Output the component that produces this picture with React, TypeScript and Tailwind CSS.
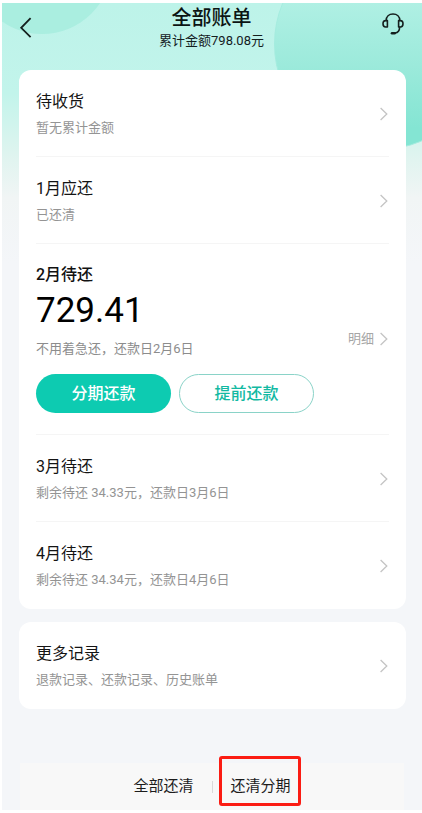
import React from "react";

interface Bill {
  title: string;
  note: string;
}

const pastBills: Bill[] = [
  { title: "待收货", note: "暂无累计金额" },
  { title: "1月应还", note: "已还清" },
];

const nextBills: Bill[] = [
  { title: "3月待还", note: "剩余待还 34.33元，还款日3月6日" },
  { title: "4月待还", note: "剩余待还 34.34元，还款日4月6日" },
];

const Chevron: React.FC = () => (
  <svg
    width="9"
    height="14"
    viewBox="0 0 9 14"
    fill="none"
    stroke="#c4c4c4"
    strokeWidth="1.3"
    className="shrink-0"
    aria-hidden="true"
  >
    <path d="M0.6 1 L6.8 7 L0.6 13" />
  </svg>
);

const HeadsetIcon: React.FC = () => (
  <svg
    width="24"
    height="24"
    viewBox="0 0 24 24"
    fill="none"
    stroke="#15201e"
    strokeWidth="1.6"
    strokeLinecap="round"
    strokeLinejoin="round"
    aria-hidden="true"
  >
    <path d="M5.2 8.4 C5.2 4.6 8 2 12 2 C16 2 18.8 4.6 18.8 8.4" />
    <path d="M6.4 8.6 H4.6 C2.9 8.6 2 9.9 2 11.8 C2 13.7 2.9 15 4.6 15 H6.4 Z" />
    <path d="M17.6 8.6 H19.4 C21.1 8.6 22 9.9 22 11.8 C22 13.7 21.1 15 19.4 15 H17.6 Z" />
    <path d="M18.6 15.2 C18.6 18.6 17 20.6 14 21" />
    <path d="M11 21.2 H13.6" strokeWidth="2.6" />
  </svg>
);

const BillRow: React.FC<Bill> = ({ title, note }) => (
  <button
    type="button"
    className="flex w-full items-center justify-between pt-5 pb-[18px] text-left"
  >
    <span className="flex flex-col gap-1">
      <span className="text-base leading-6 text-[#141414]">{title}</span>
      <span className="text-[13px] leading-5 text-[#949494]">{note}</span>
    </span>
    <Chevron />
  </button>
);

const CurrentBill: React.FC = () => (
  <section className="flex flex-col pt-[19px] pb-[21px]">
    <h2 className="text-base leading-6 font-medium text-[#111111]">2月待还</h2>
    <div className="flex items-end justify-between">
      <div>
        <p className="mt-1 text-[35px] leading-10 text-black">729.41</p>
        <p className="mt-2 text-[13px] leading-5 text-[#8c8c8c]">
          不用着急还，还款日2月6日
        </p>
      </div>
      <button
        type="button"
        className="mb-[10px] flex items-center gap-[6px] text-[13px] leading-5 text-[#a6a6a6]"
      >
        明细
        <Chevron />
      </button>
    </div>
    <div className="mt-[15px] flex gap-2">
      <button
        type="button"
        className="h-[39px] w-[135px] rounded-full bg-[#0dcbb1] text-base font-medium text-white"
      >
        分期还款
      </button>
      <button
        type="button"
        className="h-[39px] w-[135px] rounded-full border border-[#8ad3c8] text-base font-medium text-[#12b9a2]"
      >
        提前还款
      </button>
    </div>
  </section>
);

export default function App() {
  return (
    <div className="flex min-h-screen flex-col bg-white py-[3px] pl-[2px] font-['Roboto','Noto_Sans_CJK_SC',sans-serif]">
      <div className="relative flex flex-1 flex-col overflow-hidden bg-[#f4f6f9] bg-[linear-gradient(180deg,#bdf3e9_0px,#c2f4eb_90px,#def4ef_150px,#f1f5f5_195px,#f4f6f9_260px)]">
        {/* soft circles behind the header */}
        <div className="absolute -top-[109px] -left-[30px] size-[140px] rounded-full bg-[#aaeee0]" />
        <div className="absolute -top-[65px] -right-[64px] size-[212px] rounded-full border border-[#a4ecdf] bg-[linear-gradient(180deg,#b0f0e4_30%,#9ceadb_60%,#84e5d3_90%)]" />

        <header className="relative flex h-[67px] items-start justify-between pt-px pr-[17px] pl-4">
          <button type="button" aria-label="返回" className="mt-3 w-6">
            <svg
              width="16"
              height="24"
              viewBox="0 0 16 24"
              fill="none"
              stroke="#15201e"
              strokeWidth="1.8"
              aria-hidden="true"
            >
              <path d="M12.6 2.2 L3.2 11.8 L12.6 21.2" />
            </svg>
          </button>
          <div className="text-center">
            <h1 className="text-xl leading-7 font-medium text-[#0c1413]">全部账单</h1>
            <p className="text-[13px] leading-[18px] text-[#14201e]">累计金额798.08元</p>
          </div>
          <button type="button" aria-label="客服" className="mt-2">
            <HeadsetIcon />
          </button>
        </header>

        <main className="relative flex flex-col gap-[13px] pr-4 pl-[17px]">
          <div className="divide-y divide-[#f5f5f5] rounded-xl bg-white px-[17px] pb-px">
            {pastBills.map((bill) => (
              <BillRow key={bill.title} {...bill} />
            ))}
            <CurrentBill />
            {nextBills.map((bill) => (
              <BillRow key={bill.title} {...bill} />
            ))}
          </div>
          <div className="rounded-xl bg-white px-[17px] pb-px">
            <BillRow title="更多记录" note="退款记录、还款记录、历史账单" />
          </div>
        </main>

        <footer className="mx-[18px] mt-auto flex h-[47px] items-center justify-center bg-[#f8f8f8] text-[15px] text-[#1c1c1c]">
          <button type="button" className="h-full px-[18px]">
            全部还清
          </button>
          <span className="h-3 w-px bg-[#d9d9d9]" />
          <button type="button" className="relative h-full px-[18px]">
            还清分期
            <span className="absolute -top-[7px] right-2 bottom-1 left-[6px] rounded-[3px] border-3 border-[#fb1c13]" />
          </button>
        </footer>
      </div>
    </div>
  );
}
